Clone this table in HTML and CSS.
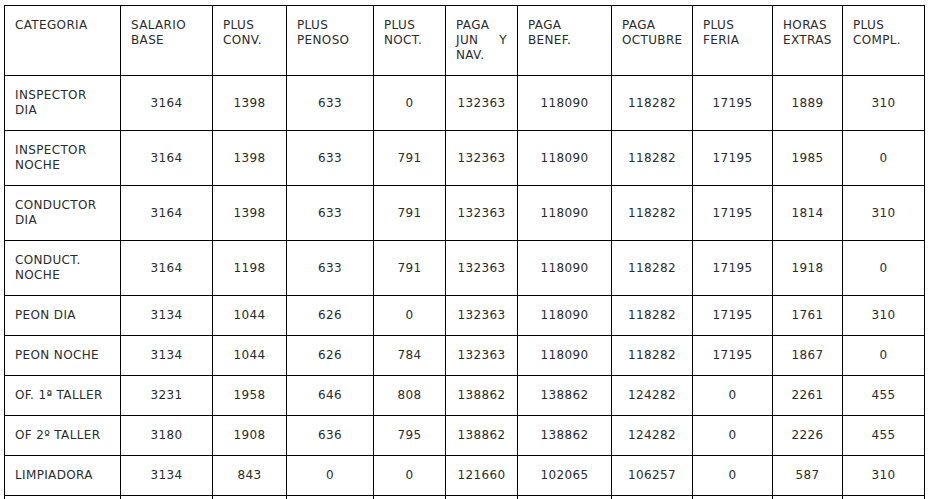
FILE: index.html
```html
<!DOCTYPE html>
<html lang="es">
<head>
<meta charset="utf-8">
<title>Tabla salarial</title>
<link rel="stylesheet" href="styles.css">
</head>
<body>
<div class="wrap">
<table class="tabla">
<colgroup>
<col class="c-cat"><col class="c-sal"><col class="c-conv"><col class="c-pen"><col class="c-noct"><col class="c-jun"><col class="c-ben"><col class="c-oct"><col class="c-fer"><col class="c-hor"><col class="c-comp">
</colgroup>
<thead>
<tr>
<th>CATEGORIA</th><th>SALARIO BASE</th><th>PLUS CONV.</th><th>PLUS PENOSO</th><th>PLUS NOCT.</th><th>PAGA JUN Y NAV.</th><th>PAGA BENEF.</th><th>PAGA OCTUBRE</th><th>PLUS FERIA</th><th>HORAS EXTRAS</th><th>PLUS COMPL.</th>
</tr>
</thead>
<tbody>
<tr><td class="cat">INSPECTOR DIA</td><td>3164</td><td>1398</td><td>633</td><td>0</td><td>132363</td><td>118090</td><td>118282</td><td>17195</td><td>1889</td><td>310</td></tr>
<tr><td class="cat">INSPECTOR NOCHE</td><td>3164</td><td>1398</td><td>633</td><td>791</td><td>132363</td><td>118090</td><td>118282</td><td>17195</td><td>1985</td><td>0</td></tr>
<tr><td class="cat">CONDUCTOR DIA</td><td>3164</td><td>1398</td><td>633</td><td>791</td><td>132363</td><td>118090</td><td>118282</td><td>17195</td><td>1814</td><td>310</td></tr>
<tr><td class="cat">CONDUCT. NOCHE</td><td>3164</td><td>1198</td><td>633</td><td>791</td><td>132363</td><td>118090</td><td>118282</td><td>17195</td><td>1918</td><td>0</td></tr>
<tr><td class="cat">PEON DIA</td><td>3134</td><td>1044</td><td>626</td><td>0</td><td>132363</td><td>118090</td><td>118282</td><td>17195</td><td>1761</td><td>310</td></tr>
<tr><td class="cat">PEON NOCHE</td><td>3134</td><td>1044</td><td>626</td><td>784</td><td>132363</td><td>118090</td><td>118282</td><td>17195</td><td>1867</td><td>0</td></tr>
<tr><td class="cat">OF. 1ª TALLER</td><td>3231</td><td>1958</td><td>646</td><td>808</td><td>138862</td><td>138862</td><td>124282</td><td>0</td><td>2261</td><td>455</td></tr>
<tr><td class="cat">OF 2º TALLER</td><td>3180</td><td>1908</td><td>636</td><td>795</td><td>138862</td><td>138862</td><td>124282</td><td>0</td><td>2226</td><td>455</td></tr>
<tr><td class="cat">LIMPIADORA</td><td>3134</td><td>843</td><td>0</td><td>0</td><td>121660</td><td>102065</td><td>106257</td><td>0</td><td>587</td><td>310</td></tr>
<tr><td class="cat">&nbsp;</td><td>&nbsp;</td><td>&nbsp;</td><td>&nbsp;</td><td>&nbsp;</td><td>&nbsp;</td><td>&nbsp;</td><td>&nbsp;</td><td>&nbsp;</td><td>&nbsp;</td><td>&nbsp;</td></tr>
</tbody>
</table>
</div>
</body>
</html>
```

FILE: styles.css
```css
html, body {
  margin: 0;
  padding: 0;
  background: #ffffff;
}

.wrap {
  padding: 5px 0 0 4px;
}

.tabla {
  border-collapse: collapse;
  table-layout: fixed;
  width: 921px;
  font-family: "DejaVu Sans", Verdana, sans-serif;
  font-size: 12px;
  line-height: 15px;
  letter-spacing: 0.35px;
  color: #2b2b2b;
}

.c-cat { width: 116px; }
.c-sal { width: 92px; }
.c-conv { width: 74px; }
.c-pen { width: 87px; }
.c-noct { width: 72px; }
.c-jun { width: 72px; }
.c-ben { width: 94px; }
.c-oct { width: 81px; }
.c-fer { width: 80px; }
.c-hor { width: 70px; }
.c-comp { width: 82px; }

.tabla th,
.tabla td {
  border: 1px solid #000000;
  padding: 12px 10px 12px 10px;
}

.tabla th {
  font-weight: normal;
  text-align: justify;
  vertical-align: top;
}

.tabla td {
  text-align: center;
  vertical-align: middle;
}

.tabla td.cat {
  text-align: left;
}
```
